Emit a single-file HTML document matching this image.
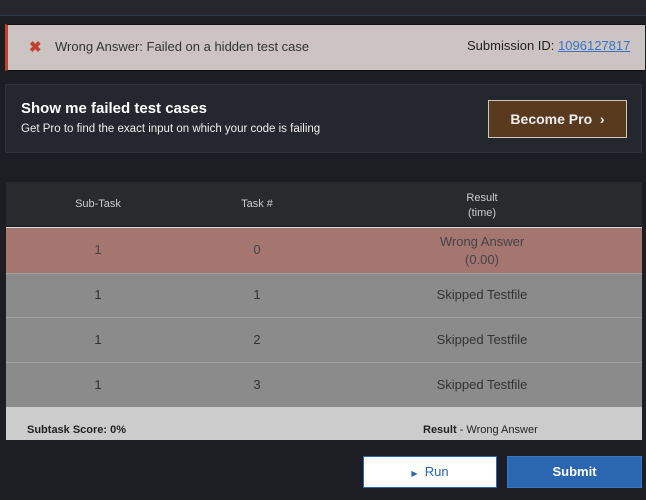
<!DOCTYPE html>
<html><head><style>
body{margin:0;width:646px;height:500px;background:#1d1e23;font-family:"Liberation Sans",sans-serif;position:relative;overflow:hidden}
.a{position:absolute}
.c{position:absolute;text-align:center;transform:translateX(-50%);white-space:nowrap}
</style></head><body>
<div class="a" style="left:0;top:0;width:646px;height:15px;background:#26272c;border-bottom:1px solid #2c3545"></div>
<div class="a" style="left:5px;top:24px;width:637px;height:45px;background:#cbc4c2;border-left:3px solid #c0422c;border-top:1px solid #111;border-bottom:1px solid #111"></div>
<div class="a" style="left:29px;top:38px;color:#c0422c;font-size:15px;font-weight:bold">✖</div>
<div class="a" style="left:55px;top:39px;color:#333;font-size:13px">Wrong Answer: Failed on a hidden test case</div>
<div class="a" style="left:467px;top:38px;color:#222;font-size:13px">Submission ID: <span style="color:#3b74c4;text-decoration:underline">1096127817</span></div>
<div class="a" style="left:5px;top:84px;width:635px;height:67px;background:#25272e;border:1px solid #30343d;border-radius:2px"></div>
<div class="a" style="left:21px;top:100px;color:#fff;font-size:15px;font-weight:bold">Show me failed test cases</div>
<div class="a" style="left:21px;top:123px;color:#eee;font-size:11.5px">Get Pro to find the exact input on which your code is failing</div>
<div class="a" style="left:488px;top:100px;width:137px;height:36px;background:#5a3a1f;border:1px solid #cfc6bd;color:#eee;font-size:14px;font-weight:bold;line-height:36px;text-align:center">Become Pro&nbsp;&nbsp;›</div>
<div class="a" style="left:6px;top:182px;width:636px;height:44px;background:#292a2d;border-bottom:1px solid #18191c"></div>
<div class="c" style="left:98px;top:198px;color:#ccc;font-size:11px">Sub-Task</div>
<div class="c" style="left:257px;top:198px;color:#ccc;font-size:11px">Task #</div>
<div class="c" style="left:482px;top:191px;color:#ccc;font-size:11px;line-height:15px">Result<br>(time)</div>
<div class="a" style="left:6px;top:227px;width:636px;height:45px;background:#a57570;border-top:1px solid #ddd"></div>
<div class="c" style="left:98px;top:242px;color:#444;font-size:13px">1</div>
<div class="c" style="left:257px;top:242px;color:#444;font-size:13px">0</div>
<div class="c" style="left:482px;top:233px;color:#444;font-size:13px;line-height:18px">Wrong Answer<br>(0.00)</div>
<div class="a" style="left:6px;top:273px;width:636px;height:43px;background:#8b8b8b;border-top:1px solid #a0a0a0"></div>
<div class="a" style="left:6px;top:317px;width:636px;height:44px;background:#8b8b8b;border-top:1px solid #a0a0a0"></div>
<div class="a" style="left:6px;top:362px;width:636px;height:44px;background:#8b8b8b;border-top:1px solid #a0a0a0"></div>
<div class="c" style="left:98px;top:287px;color:#333;font-size:13px">1</div><div class="c" style="left:257px;top:287px;color:#333;font-size:13px">1</div><div class="c" style="left:482px;top:287px;color:#333;font-size:13px">Skipped Testfile</div>
<div class="c" style="left:98px;top:332px;color:#333;font-size:13px">1</div><div class="c" style="left:257px;top:332px;color:#333;font-size:13px">2</div><div class="c" style="left:482px;top:332px;color:#333;font-size:13px">Skipped Testfile</div>
<div class="c" style="left:98px;top:377px;color:#333;font-size:13px">1</div><div class="c" style="left:257px;top:377px;color:#333;font-size:13px">3</div><div class="c" style="left:482px;top:377px;color:#333;font-size:13px">Skipped Testfile</div>
<div class="a" style="left:6px;top:407px;width:636px;height:33px;background:#cccccc"></div>
<div class="a" style="left:27px;top:424px;color:#222;font-size:11px;font-weight:bold">Subtask Score: 0%</div>
<div class="a" style="left:423px;top:424px;color:#222;font-size:11px"><b>Result</b> - Wrong Answer</div>
<div class="a" style="left:363px;top:456px;width:132px;height:30px;background:#fff;border:1px solid #2a67b0;color:#2a67b0;font-size:13px;line-height:30px;text-align:center"><span style="font-size:8px">▶</span>&nbsp;&nbsp;Run</div>
<div class="a" style="left:507px;top:456px;width:133px;height:30px;background:#2a67b0;border:1px solid #3a77c0;color:#fff;font-size:13px;font-weight:bold;line-height:30px;text-align:center">Submit</div>
</body></html>
